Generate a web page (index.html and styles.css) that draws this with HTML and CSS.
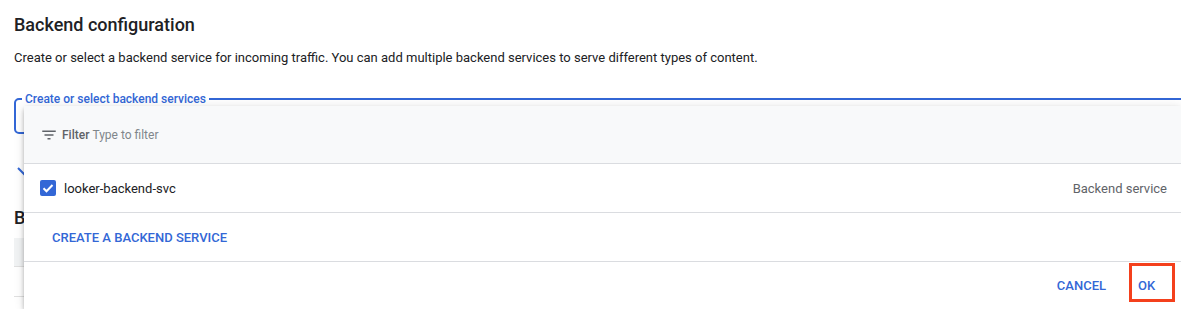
FILE: index.html
```html
<!DOCTYPE html>
<html lang="en">
<head>
    <meta charset="UTF-8">
    <meta name="viewport" content="width=device-width, initial-scale=1.0">
    <title>Backend configuration</title>
    <link rel="stylesheet" href="styles.css">
</head>
<body>
    <div class="page">
        <h2 class="section-title">Backend configuration</h2>
        <p class="section-desc">Create or select a backend service for incoming traffic. You can add multiple backend services to serve different types of content.</p>

        <fieldset class="select-field">
            <legend>Create or select backend services</legend>
            <div class="select-value"></div>
        </fieldset>

        <div class="advanced-toggle">
            <svg width="20" height="12" viewBox="0 0 20 12"><path d="M2 1l6 6 6-6" fill="none" stroke="#3367d6" stroke-width="2"/></svg>
        </div>

        <h2 class="section-title second">Backend services</h2>
        <div class="services-table">
            <div class="table-head"></div>
            <div class="table-row"></div>
        </div>
    </div>

    <!-- Выпадающее меню поверх поля -->
    <div class="dropdown">
        <div class="dropdown-filter">
            <svg class="filter-icon" width="18" height="18" viewBox="0 0 24 24"><path d="M10 18h4v-2h-4v2zM3 6v2h18V6H3zm3 7h12v-2H6v2z" fill="#5f6368"/></svg>
            <span class="filter-label">Filter</span>
            <span class="filter-placeholder">Type to filter</span>
        </div>
        <div class="dropdown-item">
            <span class="checkbox">
                <svg width="16" height="16" viewBox="0 0 16 16"><path d="M3.5 8.2l3 3 6-6.2" fill="none" stroke="#fff" stroke-width="2"/></svg>
            </span>
            <span class="item-name">looker-backend-svc</span>
            <span class="item-type">Backend service</span>
        </div>
        <div class="dropdown-create">
            <button class="text-button">CREATE A BACKEND SERVICE</button>
        </div>
        <div class="dropdown-actions">
            <button class="text-button">CANCEL</button>
            <button class="text-button highlighted">OK</button>
        </div>
    </div>
</body>
</html>
```

FILE: styles.css
```css
body {
    font-family: Roboto, "Liberation Sans", Arial, sans-serif;
    margin: 0;
    padding: 0;
    background-color: #fff;
    color: #202124;
    overflow: hidden;
    position: relative;
    height: 309px;
}

.page {
    padding: 13px 0 0 14px;
}

.section-title {
    font-size: 18px;
    font-weight: 500;
    line-height: 24px;
    margin: 0;
    color: #202124;
}

.section-title.second {
    margin-top: 19px;
}

.section-desc {
    font-size: 13px;
    line-height: 20px;
    margin: 11px 0 0;
}

.select-field {
    margin: 24px -20px 0 0;
    padding: 0;
    border: 2px solid #3367d6;
    border-radius: 5px;
}

.select-field legend {
    font-size: 12px;
    font-weight: 500;
    line-height: 14px;
    color: #3367d6;
    padding: 0 3px;
    margin-left: 6px;
}

.select-value {
    height: 26px;
}

.advanced-toggle {
    height: 20px;
    margin-top: 33px;
    padding-left: 2px;
}

.advanced-toggle svg {
    display: block;
}

.services-table {
    margin-top: 8px;
}

.table-head {
    height: 28px;
    background-color: #f1f3f4;
    border-bottom: 1px solid #e0e0e0;
}

.table-row {
    height: 29px;
    border-bottom: 1px solid #e0e0e0;
}

.dropdown {
    position: absolute;
    top: 106px;
    left: 24px;
    right: 0;
    bottom: 0;
    background: white;
    box-shadow: 0 2px 4px -1px rgba(0, 0, 0, 0.2), 0 4px 5px 0 rgba(0, 0, 0, 0.14), 0 1px 10px 0 rgba(0, 0, 0, 0.12);
}

.dropdown-filter {
    display: flex;
    align-items: center;
    height: 56px;
    padding: 1px 0 0 16px;
    background-color: #f8f9fa;
    border-bottom: 1px solid #dadce0;
    font-size: 12px;
}

.filter-icon {
    margin-right: 4px;
}

.filter-label {
    font-weight: 500;
    color: #5f6368;
    margin-right: 3px;
}

.filter-placeholder {
    color: #80868b;
}

.dropdown-item {
    display: flex;
    align-items: center;
    height: 48px;
    padding: 0 14px 0 16px;
    border-bottom: 1px solid #dadce0;
    font-size: 13px;
}

.checkbox {
    width: 16px;
    height: 16px;
    border-radius: 2px;
    background-color: #3367d6;
    margin-right: 8px;
}

.checkbox svg {
    display: block;
}

.item-name {
    flex: 1;
}

.item-type {
    color: #5f6368;
}

.dropdown-create {
    display: flex;
    align-items: center;
    height: 48px;
    padding-left: 20px;
    border-bottom: 1px solid #dadce0;
}

.text-button {
    font-family: inherit;
    font-size: 13px;
    font-weight: 500;
    color: #3367d6;
    background: none;
    border: none;
    padding: 0 8px;
    height: 36px;
    cursor: pointer;
}

.dropdown-actions {
    display: flex;
    justify-content: flex-end;
    align-items: flex-start;
    gap: 15px;
    padding: 1px 6px 0 0;
}

.dropdown-actions .text-button {
    margin-top: 4px;
}

.dropdown-actions .highlighted {
    border: 3px solid #f4401c;
    height: 39px;
    width: 46px;
    margin-top: 0;
    padding: 5px 0 0 6px;
    text-align: left;
}
```
